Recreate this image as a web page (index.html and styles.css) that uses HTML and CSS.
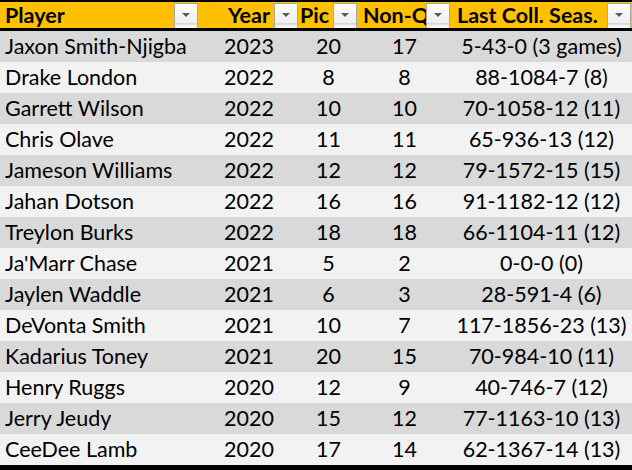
FILE: index.html
```html
<!DOCTYPE html>
<html>
<head>
<meta charset="utf-8">
<link rel="stylesheet" href="styles.css">
</head>
<body>
<div class="sheet">
  <div class="head">
    <div class="hc c-player"><span class="ht">Player</span><span class="fb"></span></div>
    <div class="hc c-year"><span class="ht">Year</span><span class="fb"></span></div>
    <div class="hc c-pick"><span class="ht">Pick</span><span class="fb"></span></div>
    <div class="hc c-nonq"><span class="ht">Non-QB</span><span class="fb"></span></div>
    <div class="hc c-last"><span class="ht">Last Coll. Seas.</span><span class="fb"></span></div>
  </div>
  <div class="body">
    <div class="row dark"><div class="name">Jaxon Smith-Njigba</div><div>2023</div><div>20</div><div>17</div><div>5-43-0 (3 games)</div></div>
    <div class="row light"><div class="name">Drake London</div><div>2022</div><div>8</div><div>8</div><div>88-1084-7 (8)</div></div>
    <div class="row dark"><div class="name">Garrett Wilson</div><div>2022</div><div>10</div><div>10</div><div>70-1058-12 (11)</div></div>
    <div class="row light"><div class="name">Chris Olave</div><div>2022</div><div>11</div><div>11</div><div>65-936-13 (12)</div></div>
    <div class="row dark"><div class="name">Jameson Williams</div><div>2022</div><div>12</div><div>12</div><div>79-1572-15 (15)</div></div>
    <div class="row light"><div class="name">Jahan Dotson</div><div>2022</div><div>16</div><div>16</div><div>91-1182-12 (12)</div></div>
    <div class="row dark"><div class="name">Treylon Burks</div><div>2022</div><div>18</div><div>18</div><div>66-1104-11 (12)</div></div>
    <div class="row light"><div class="name">Ja'Marr Chase</div><div>2021</div><div>5</div><div>2</div><div>0-0-0 (0)</div></div>
    <div class="row dark"><div class="name">Jaylen Waddle</div><div>2021</div><div>6</div><div>3</div><div>28-591-4 (6)</div></div>
    <div class="row light"><div class="name">DeVonta Smith</div><div>2021</div><div>10</div><div>7</div><div>117-1856-23 (13)</div></div>
    <div class="row dark"><div class="name">Kadarius Toney</div><div>2021</div><div>20</div><div>15</div><div>70-984-10 (11)</div></div>
    <div class="row light"><div class="name">Henry Ruggs</div><div>2020</div><div>12</div><div>9</div><div>40-746-7 (12)</div></div>
    <div class="row dark"><div class="name">Jerry Jeudy</div><div>2020</div><div>15</div><div>12</div><div>77-1163-10 (13)</div></div>
    <div class="row light"><div class="name">CeeDee Lamb</div><div>2020</div><div>17</div><div>14</div><div>62-1367-14 (13)</div></div>
  </div>
</div>
</body>
</html>
```

FILE: styles.css
```css
html, body {
  margin: 0;
  padding: 0;
  background: #ffffff;
}
.sheet {
  width: 632px;
  height: 470px;
  overflow: hidden;
  font-family: Lato, "Open Sans", sans-serif;
  font-size: 21.5px;
  color: #000;
}
.head, .row {
  display: grid;
  grid-template-columns: 199px 100px 59px 93px 181px;
}
.head {
  height: 26px;
  background: #ffc000;
  border-top: 2px solid #000;
  border-bottom: 3px solid #000;
}
.hc {
  position: relative;
  overflow: hidden;
  white-space: nowrap;
  font-weight: 700;
  line-height: 27px;
}
.c-player .ht { padding-left: 5px; }
.c-year .ht { padding-left: 29px; }
.c-pick .ht {
  display: inline-block;
  width: 30px;
  overflow: hidden;
  vertical-align: top;
  padding-left: 1px;
}
.c-nonq .ht { padding-left: 5px; }
.c-last .ht { padding-left: 6px; }
.fb {
  position: absolute;
  top: 1px;
  right: 1px;
  width: 24px;
  height: 26px;
  box-sizing: border-box;
  border: 1px solid #a8a8a8;
  border-bottom: none;
  background: linear-gradient(#fdfdfd, #eeeeee 75%, #c8c8c8 80%, #f4f4f4 84%);
}
.fb::after {
  content: "";
  position: absolute;
  left: 7px;
  top: 9px;
  border-left: 4px solid transparent;
  border-right: 4px solid transparent;
  border-top: 4px solid #5a5a5a;
}
.body {
  border-bottom: 5px solid #000;
}
.row {
  height: 31px;
  line-height: 31px;
  white-space: nowrap;
}
.row > div {
  text-align: center;
  overflow: hidden;
}
.row > .name {
  text-align: left;
  padding-left: 5px;
}
.dark { background: #d9d9d9; }
.light { background: #f2f2f2; }
```
